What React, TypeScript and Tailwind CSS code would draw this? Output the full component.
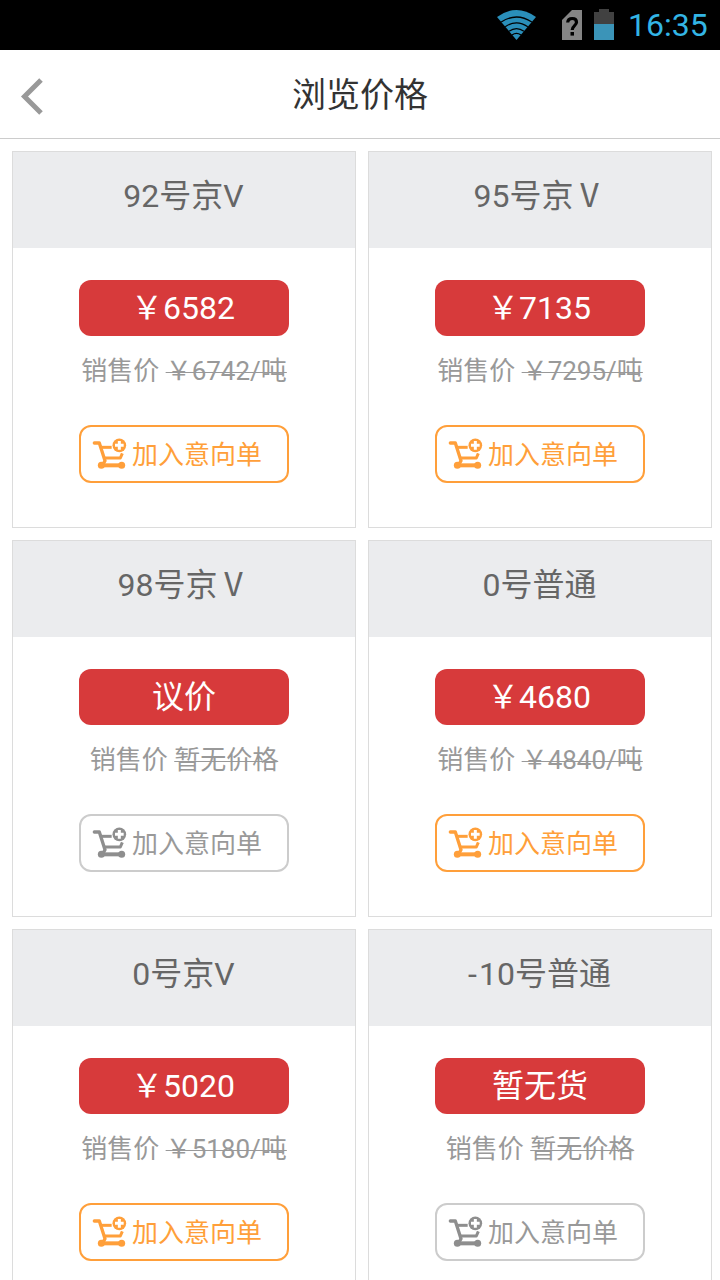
type Product = { name: string; price: string; sale: string; available: boolean };

const YEN = '\uffe5';

const products: Product[] = [
  { name: '92号京V', price: `${YEN}6582`, sale: `${YEN}6742/吨`, available: true },
  { name: '95号京Ⅴ', price: `${YEN}7135`, sale: `${YEN}7295/吨`, available: true },
  { name: '98号京Ⅴ', price: '议价', sale: '暂无价格', available: false },
  { name: '0号普通', price: `${YEN}4680`, sale: `${YEN}4840/吨`, available: true },
  { name: '0号京V', price: `${YEN}5020`, sale: `${YEN}5180/吨`, available: true },
  { name: '-10号普通', price: '暂无货', sale: '暂无价格', available: false },
];

function CartIcon() {
  return (
    <svg width="35" height="32" viewBox="66 66 105 96" fill="none" stroke="currentColor" className="mt-[-2px] block shrink-0">
      <path d="M73 84H88L105 137L98 150" strokeWidth="10" strokeLinecap="round" strokeLinejoin="round" />
      <path d="M92 97H125" strokeWidth="9" />
      <path d="M103 129H151L157 115" strokeWidth="9" strokeLinejoin="round" />
      <path d="M93 151H156" strokeWidth="12" />
      <circle cx="94" cy="151" r="10.5" fill="currentColor" stroke="none" />
      <circle cx="155" cy="151" r="10.5" fill="currentColor" stroke="none" />
      <circle cx="148" cy="91" r="20.5" fill="currentColor" stroke="none" />
      <path d="M148 78V104M135 91H161" stroke="#fff" strokeWidth="9" />
    </svg>
  );
}

function StatusBar() {
  return (
    <div className="flex h-[50px] items-start bg-black text-[#33b5e5]">
      <svg width="40" height="32" viewBox="0 0 40 32" className="mt-[9px] ml-[497px]">
        <path d="M19.5 31L0 8Q19.5 -6 39 8Z" fill="#2a8fba" />
        <path d="M4.2 13Q19.5 3 34.8 13M8.2 17.8Q19.5 9.8 30.8 17.8M12 22.3Q19.5 17 27 22.3M15 26Q19.5 22.8 24 26" stroke="#000" strokeWidth="1.3" fill="none" />
      </svg>
      <div className="mt-[10px] ml-[25px]">
        <svg width="20" height="30" viewBox="0 0 20 30">
          <path d="M10 0H20V30H0V10Z" fill="#858585" />
          <path d="M5.7 12.5Q6 8.5 10.3 8.5Q14.5 8.5 14.5 12.3C14.5 15.6 10.2 15.7 10.2 20" stroke="#000" strokeWidth="3.2" fill="none" />
          <path d="M8.5 22H12V25.6H8.5Z" fill="#000" />
        </svg>
      </div>
      <svg width="20" height="31" viewBox="0 0 20 31" className="mt-[9px] ml-[12px]">
        <path d="M5 0H15V3H20V15H0V3H5Z" fill="#414141" />
        <path d="M0 15H20V31H0Z" fill="#3b94b8" />
      </svg>
      <span className="mt-[5px] ml-[14px] text-[32px] leading-[40px]">16:35</span>
    </div>
  );
}

function ProductName({ name }: { name: string }) {
  return name.startsWith('-') ? (
    <>
      <span className="tracking-[2px]">-</span>
      {name.slice(1)}
    </>
  ) : (
    <>{name}</>
  );
}

function ProductCard({ product }: { product: Product }) {
  return (
    <section className="flex h-[377px] flex-col items-center border border-[#dcdcdc] bg-white">
      <h2 className="h-24 w-full bg-[#ebecee] pt-[20px] pr-px text-center text-[32px] leading-[48px] text-[#666]">
        <ProductName name={product.name} />
      </h2>
      <div
        className={`mt-8 h-14 w-[210px] rounded-xl bg-[#d73a3b] text-center text-[32px] text-white ${
          product.price.startsWith(YEN) ? 'pr-[2px] leading-[56px]' : 'leading-[57px]'
        }`}
      >
        {product.price}
      </div>
      <p className="mt-[15px] h-10 text-[26px] leading-[40px] whitespace-nowrap text-[#999]">
        销售价 <s className="decoration-1">{product.sale}</s>
      </p>
      <button
        className={`mt-[34px] flex h-[58px] w-[210px] items-center rounded-xl border-2 pl-[11px] text-[26px] ${
          product.available ? 'border-[#ff9f3a] text-[#ff9f3a]' : 'border-[#ccc] text-[#8e8e8e]'
        }`}
      >
        <CartIcon />
        <span className={`mt-px ml-[5px] leading-[40px] ${product.available ? '' : 'text-[#999]'}`}>加入意向单</span>
      </button>
    </section>
  );
}

export default function App() {
  return (
    <div className="h-[1280px] w-[720px] overflow-hidden bg-white font-['Roboto','Noto_Sans_CJK_SC',sans-serif]">
      <StatusBar />
      <header className="grid h-[89px] grid-cols-[64px_1fr_64px] border-b border-[#ccc]">
        <button aria-label="返回" className="flex items-start pt-[27px] pl-[20px]">
          <svg width="24" height="38" viewBox="0 0 24 38" fill="none" stroke="#999" strokeWidth="5">
            <path d="M21 3L4.5 19.5L21 36" />
          </svg>
        </button>
        <h1 className="pt-[21px] text-center text-[34px] leading-[48px] text-[#333]">浏览价格</h1>
      </header>
      <main className="grid grid-cols-2 gap-3 pt-3 pr-2 pl-3">
        {products.map((product) => (
          <ProductCard key={product.name} product={product} />
        ))}
      </main>
    </div>
  );
}
